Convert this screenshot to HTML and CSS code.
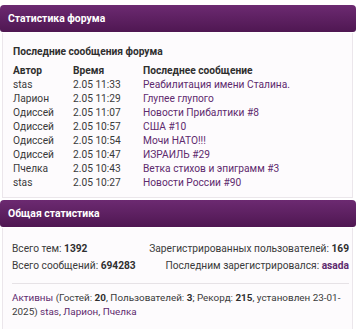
FILE: index.html
```html
<!DOCTYPE html>
<html lang="ru">
<head>
<meta charset="utf-8">
<link rel="stylesheet" href="styles.css">
</head>
<body>
<div class="block">
  <div class="cat">Статистика форума</div>
  <div class="panel p1">
    <div class="subtitle">Последние сообщения форума</div>
    <table class="recent">
      <tr><th class="c1">Автор</th><th class="c2">Время</th><th>Последнее сообщение</th></tr>
      <tr><td>stas</td><td>2.05 11:33</td><td><a>Реабилитация имени Сталина.</a></td></tr>
      <tr><td>Ларион</td><td>2.05 11:29</td><td><a>Глупее глупого</a></td></tr>
      <tr><td>Одиссей</td><td>2.05 11:07</td><td><a>Новости Прибалтики #8</a></td></tr>
      <tr><td>Одиссей</td><td>2.05 10:57</td><td><a>США #10</a></td></tr>
      <tr><td>Одиссей</td><td>2.05 10:54</td><td><a>Мочи НАТО!!!</a></td></tr>
      <tr><td>Одиссей</td><td>2.05 10:47</td><td><a>ИЗРАИЛЬ #29</a></td></tr>
      <tr><td>Пчелка</td><td>2.05 10:43</td><td><a>Ветка стихов и эпиграмм #3</a></td></tr>
      <tr><td>stas</td><td>2.05 10:27</td><td><a>Новости России #90</a></td></tr>
    </table>
  </div>
  <div class="cat cat2">Общая статистика</div>
  <div class="panel p2">
    <div class="stats">
      <div class="row"><span>Всего тем: <b>1392</b></span><span>Зарегистрированных пользователей: <b>169</b></span></div>
      <div class="row"><span>Всего сообщений: <b>694283</b></span><span>Последним зарегистрировался: <a class="strong">asada</a></span></div>
    </div>
    <p class="online"><a>Активны</a> (Гостей: <b>20</b>, Пользователей: <b>3</b>; Рекорд: <b>215</b>, установлен 23-01-2025) <a>stas</a>, <a>Ларион</a>, <a>Пчелка</a></p>
  </div>
</div>
</body>
</html>
```
FILE: styles.css
```css
* { box-sizing: border-box; }
html, body { margin: 0; padding: 0; }
body {
  background: #ffffff;
  font-family: Roboto, "Liberation Sans", sans-serif;
  font-size: 10.2px;
  color: #3a3a3a;
  padding-top: 5px;
}
.block { width: 356px; }
.cat {
  height: 27px;
  line-height: 27px;
  padding-left: 8px;
  color: #ffffff;
  font-weight: bold;
  font-size: 10.4px;
  border-radius: 4px 4px 3px 3px;
  background: linear-gradient(#6c2a71, #4f1752);
}
.cat2 { margin-top: 2px; }
.panel {
  margin: 1px 3px 0 2px;
  background: #fdfbfd;
  border: 1px solid #ebe6eb;
  border-top: none;
}
.p1 { padding: 12px 9px 7px 10px; }
.subtitle { font-weight: bold; line-height: 14px; color: #2f2f2f; }
.recent { border-collapse: collapse; margin-top: 5px; }
.recent th, .recent td { padding: 0; height: 14px; line-height: 14px; text-align: left; white-space: nowrap; }
.recent th { font-weight: bold; color: #2f2f2f; }
.recent .c1 { width: 60px; }
.recent .c2 { width: 70px; }
a { color: #5e2a6e; }
.strong { font-weight: bold; }
b { color: #2f2f2f; }
.p2 { padding: 0 3px 10px 9px; }
.stats { padding-top: 12px; padding-bottom: 9px; border-bottom: 1px solid #e6e2e6; }
.row { display: flex; justify-content: space-between; line-height: 17px; }
.online { margin: 0; padding-top: 7px; line-height: 14px; font-size: 9.9px; }
```
